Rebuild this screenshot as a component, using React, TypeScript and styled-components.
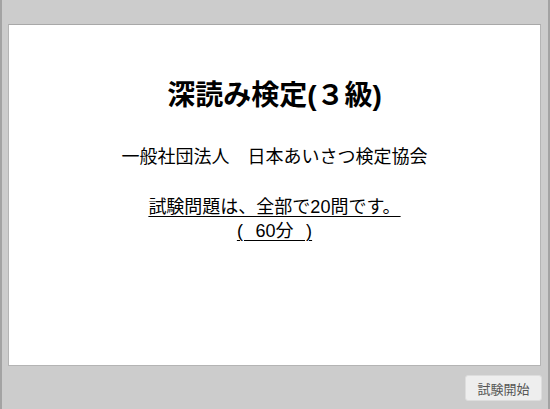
import React from "react";
import styled, { createGlobalStyle } from "styled-components";

const Global = createGlobalStyle`
  html, body { margin: 0; padding: 0; }
  body {
    background: #cccccc;
    font-family: "Liberation Sans", "Noto Sans CJK JP", sans-serif;
    color: #000;
  }
`;

const Frame = styled.div`
  box-sizing: border-box;
  width: 550px;
  height: 409px;
  display: flex;
  flex-direction: column;
  padding: 24px 7px 0 8px;
  border-left: 2px solid #a3a3a3;
  border-right: 2px solid #a3a3a3;
  background: #cccccc;
`;

const Panel = styled.div`
  box-sizing: border-box;
  height: 342px;
  margin-left: -2px;
  background: #ffffff;
  border: 1px solid #b4b4b4;
  border-top-color: #a8a8a8;
  display: flex;
  flex-direction: column;
  align-items: center;
  padding-top: 54px;
`;

const Title = styled.h1`
  margin: 0;
  font-size: 28px;
  font-weight: bold;
  line-height: 34px;
`;

const Org = styled.p`
  margin: 32px 0 0;
  font-size: 18px;
  line-height: 24px;
`;

const Note = styled.p`
  margin: 26px 0 0;
  font-size: 18px;
  line-height: 24px;
  text-align: center;
`;

const U = styled.span`
  text-decoration: underline;
  text-underline-offset: 3px;
  text-decoration-thickness: 1px;
  white-space: pre;
`;

const Footer = styled.div`
  display: flex;
  justify-content: flex-end;
  padding-top: 9px;
`;

const StartButton = styled.button`
  box-sizing: border-box;
  width: 77px;
  height: 26px;
  margin-right: -1px;
  border: 1px solid #dddddd;
  border-radius: 3px;
  background: #eeeeee;
  color: #555555;
  font-family: "Noto Sans CJK JP", sans-serif;
  font-size: 13px;
  padding: 0;
  cursor: pointer;
`;

export default function App() {
  return (
    <>
      <Global />
      <Frame>
        <Panel>
          <Title>深読み検定(３級)</Title>
          <Org>一般社団法人　日本あいさつ検定協会</Org>
          <Note>
            <U>試験問題は、全部で20問です。</U>
            <br />
            <U>{"(\u2002\u200960分\u2002\u2009)"}</U>
          </Note>
        </Panel>
        <Footer>
          <StartButton>試験開始</StartButton>
        </Footer>
      </Frame>
    </>
  );
}
